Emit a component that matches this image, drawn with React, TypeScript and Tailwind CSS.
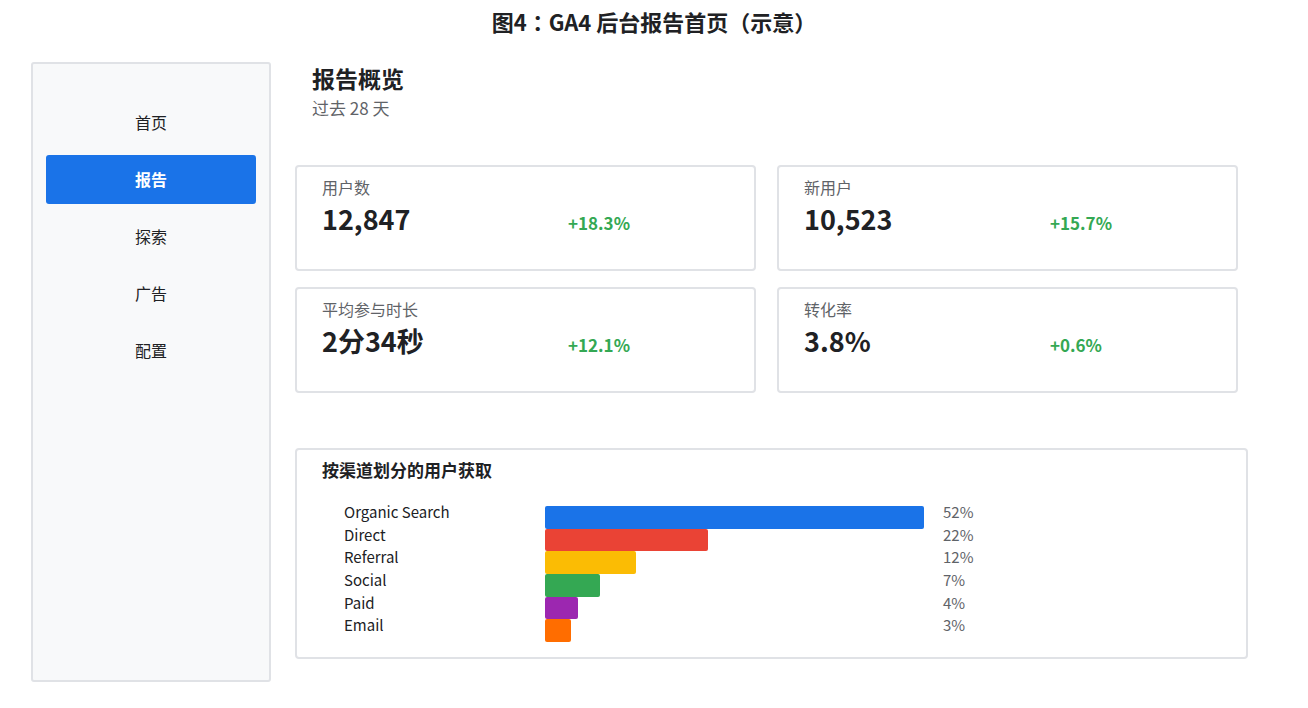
const NAV = ['首页', '报告', '探索', '广告', '配置'];

const METRICS = [
  { label: '用户数', value: '12,847', change: '+18.3%' },
  { label: '新用户', value: '10,523', change: '+15.7%' },
  { label: '平均参与时长', value: '2分34秒', change: '+12.1%' },
  { label: '转化率', value: '3.8%', change: '+0.6%' },
];

const CHANNELS = [
  { name: 'Organic Search', pct: '52%', width: 379, color: 'bg-[#1a73e8]' },
  { name: 'Direct', pct: '22%', width: 163, color: 'bg-[#ea4335]' },
  { name: 'Referral', pct: '12%', width: 91, color: 'bg-[#fbbc04]' },
  { name: 'Social', pct: '7%', width: 55, color: 'bg-[#34a853]' },
  { name: 'Paid', pct: '4%', width: 33, color: 'bg-[#9c27b0]' },
  { name: 'Email', pct: '3%', width: 26, color: 'bg-[#ff6d00]' },
];

export default function App() {
  return (
    <div className="w-[1308px] h-[708px] bg-white text-[#202124] font-['Noto_Sans_CJK_SC',sans-serif] overflow-hidden">
      <h1 className="pt-[6px] text-center text-[22px] leading-[30px] font-bold font-['Noto_Sans_CJK_JP',sans-serif]">图4：GA4 后台报告首页（示意）</h1>

      <div className="flex mt-[26px] ml-[31px] gap-[24px]">
        {/* sidebar */}
        <aside className="w-[240px] h-[620px] bg-[#f8f9fa] border-2 border-[#e0e2e6] rounded-[3px] pt-[34px] px-[13px]">
          <nav className="flex flex-col gap-[8px]">
            {NAV.map(item => (
              <div
                key={item}
                className={`h-[49px] flex items-center justify-center rounded-[3px] text-[16px] leading-[22px] ${item === '报告' ? 'bg-[#1a73e8] text-white font-bold' : 'text-[#202124]'}`}
              >
                <span className="-mt-[1px]">{item}</span>
              </div>
            ))}
          </nav>
        </aside>

        <main className="flex flex-col">
          <div className="pl-[17px] pt-[1px]">
            <h2 className="text-[23px] leading-[30px] font-bold">报告概览</h2>
            <p className="mt-[3px] text-[17px] leading-[24px] text-[#5f6368]">过去 28 天</p>
          </div>

          <div className="mt-[45px] grid grid-cols-[461px_461px] gap-x-[21px] gap-y-[16px]">
            {METRICS.map(m => (
              <div key={m.label} className="h-[106px] bg-white border-2 border-[#e0e2e6] rounded-[4px] pl-[25px] pt-[9px]">
                <div className="text-[16px] leading-[22px] text-[#5f6368]">{m.label}</div>
                <div className="mt-[4px] h-[34px] flex items-center">
                  <span className="w-[246px] text-[27px] leading-[34px] font-bold">{m.value}</span>
                  <span className="mt-[8px] text-[17px] leading-[22px] font-bold text-[#34a853]">{m.change}</span>
                </div>
              </div>
            ))}
          </div>

          <section className="mt-[55px] w-[953px] h-[211px] border-2 border-[#e0e2e6] rounded-[4px] pl-[25px] pt-[8px]">
            <h3 className="text-[17px] leading-[24px] font-bold">按渠道划分的用户获取</h3>
            <div className="mt-[24px] flex flex-col">
              {CHANNELS.map(c => (
                <div key={c.name} className="h-[22.7px] flex items-start">
                  <span className="w-[223px] pl-[22px] -mt-[3px] text-[15px] leading-[18px] text-[#202124]">{c.name}</span>
                  <div className="w-[398px] h-full">
                    <div className={`h-full rounded-[2px] ${c.color}`} style={{ width: c.width }} />
                  </div>
                  <span className="-mt-[3px] text-[15px] leading-[18px] text-[#5f6368]">{c.pct}</span>
                </div>
              ))}
            </div>
          </section>
        </main>
      </div>
    </div>
  );
}
